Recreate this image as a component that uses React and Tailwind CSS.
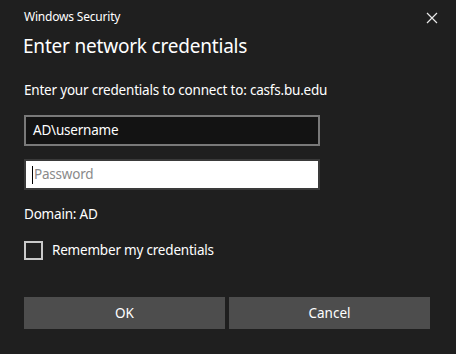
export default function App() {
  return (
    <div className="w-[456px] h-[354px] bg-[#1f1f1f] text-white flex flex-col" style={{ fontFamily: '"Noto Sans", "Open Sans", sans-serif' }}>
      <div className="flex items-center justify-between pl-6 pr-[18px] pt-[7px] h-[26px]">
        <span className="text-[12px] leading-none tracking-[-0.2px]">Windows Security</span>
        <svg width="12" height="12" viewBox="0 0 12 12" className="mt-[2px]">
          <path d="M1 1 L11 11 M11 1 L1 11" stroke="#e8e8e8" strokeWidth="1.2" />
        </svg>
      </div>
      <div className="pl-[23px] mt-[6px] text-[19px] leading-[28px] tracking-[-0.2px]">Enter network credentials</div>
      <div className="pl-6 mt-[20px] text-[13.5px] leading-[20px] tracking-[-0.2px]">Enter your credentials to connect to: casfs.bu.edu</div>
      <div className="pl-6 mt-[15px] flex flex-col gap-[13px] w-[320px]">
        <div className="h-[31px] border-2 border-[#797979] bg-[#131313] flex items-center pl-[7px] text-[13.5px] tracking-[-0.2px]">AD\username</div>
        <div className="h-[31px] border-2 border-[#3a3a3a] bg-white flex items-center pl-[6px] text-[13.5px] tracking-[-0.2px] text-[#8a8a8a]">
          <span className="w-px h-[18px] bg-black mr-[1px]"></span>Password
        </div>
      </div>
      <div className="pl-6 mt-[14px] text-[13.5px] leading-[20px] tracking-[-0.2px]">Domain: AD</div>
      <div className="pl-6 mt-[16px] flex items-center gap-[9px]">
        <div className="w-[19px] h-[19px] border-2 border-[#c9c9c9]"></div>
        <span className="text-[13.5px] tracking-[-0.2px]">Remember my credentials</span>
      </div>
      <div className="pl-6 pr-[26px] mt-[37px] flex gap-[4px]">
        <button className="flex-1 h-[32px] bg-[#4d4d4d] text-[13.5px] text-white">OK</button>
        <button className="flex-1 h-[32px] bg-[#4d4d4d] text-[13.5px] text-white">Cancel</button>
      </div>
    </div>
  );
}
